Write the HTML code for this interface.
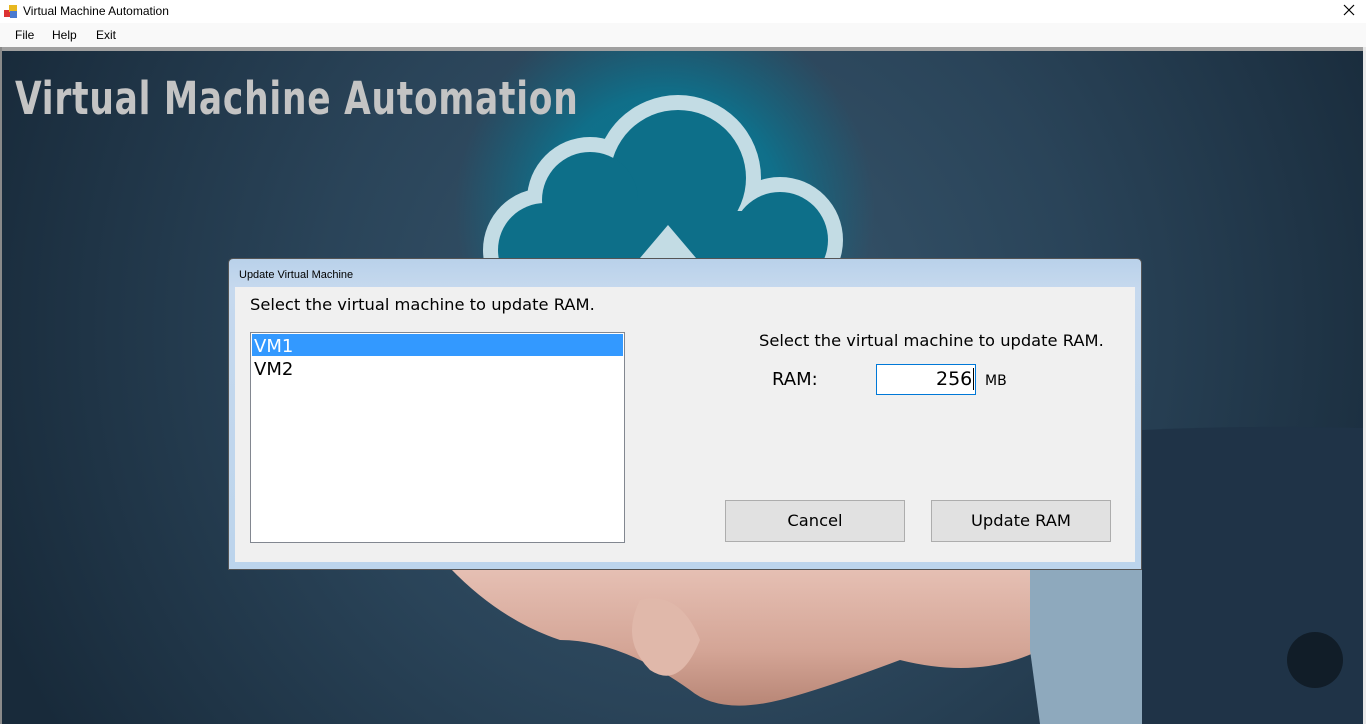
<!DOCTYPE html>
<html><head><meta charset="utf-8"><style>
*{margin:0;padding:0;box-sizing:border-box}
body{width:1366px;height:724px;overflow:hidden;background:#fff;font-family:"Liberation Sans",sans-serif;position:relative}
.t{position:absolute;font-family:"DejaVu Sans","Liberation Sans",sans-serif;white-space:nowrap}
</style></head><body>
<div style="position:absolute;left:0;top:0;width:1366px;height:23px;background:#fff"></div>
<svg style="position:absolute;left:4px;top:5px" width="14" height="14"><rect x="0" y="5" width="6" height="7" fill="#d33"/><rect x="5" y="0" width="8" height="7" fill="#e8b820"/><rect x="6" y="6" width="7" height="7" fill="#4a7ad0"/></svg>
<div style="position:absolute;left:23px;top:4px;font-size:12px;color:#000;font-family:'Liberation Sans',sans-serif">Virtual Machine Automation</div>
<svg style="position:absolute;left:1343px;top:4px" width="12" height="12"><path d="M1 1L11 11M11 1L1 11" stroke="#000" stroke-width="1.2"/></svg>
<div style="position:absolute;left:0;top:23px;width:1366px;height:24px;background:#f9f9f9;font-size:12px">
<span style="position:absolute;left:15px;top:5px">File</span><span style="position:absolute;left:52px;top:5px">Help</span><span style="position:absolute;left:96px;top:5px">Exit</span></div>
<div style="position:absolute;left:0;top:47px;width:1366px;height:4px;background:#a0a0a0"></div>
<div style="position:absolute;left:0;top:47px;width:2px;height:677px;background:#8a8a8a"></div>
<div style="position:absolute;right:0;top:47px;width:3px;height:677px;background:#e8e8e8"></div>
<svg style="position:absolute;left:2px;top:51px" width="1361" height="673" viewBox="2 51 1361 673">
<defs>
<radialGradient id="bg" cx="700" cy="330" r="760" gradientUnits="userSpaceOnUse">
<stop offset="0" stop-color="#38576e"/><stop offset="0.5" stop-color="#2a4459"/><stop offset="1" stop-color="#182a3a"/></radialGradient>
<radialGradient id="glow" cx="665" cy="210" r="210" gradientUnits="userSpaceOnUse">
<stop offset="0" stop-color="#0a7b96"/><stop offset="0.55" stop-color="#0a7590" stop-opacity="0.85"/><stop offset="1" stop-color="#0a6a85" stop-opacity="0"/></radialGradient>
<linearGradient id="skin" x1="0" y1="0" x2="0" y2="1"><stop offset="0" stop-color="#e6c0b4"/><stop offset="0.6" stop-color="#d4a596"/><stop offset="1" stop-color="#b88676"/></linearGradient>
</defs>
<rect x="2" y="51" width="1361" height="673" fill="url(#bg)"/>
<rect x="2" y="51" width="1361" height="673" fill="url(#glow)"/>
<g fill="#c3dce4">
<circle cx="678" cy="178" r="83"/><circle cx="590" cy="200" r="63"/><circle cx="545" cy="250" r="62"/><circle cx="780" cy="240" r="63"/>
</g>
<g fill="#0d6f89">
<circle cx="678" cy="178" r="68"/><circle cx="590" cy="200" r="48"/><circle cx="545" cy="250" r="47"/><circle cx="780" cy="240" r="48"/>
<rect x="545" y="200" width="190" height="80"/><rect x="730" y="211" width="30" height="69"/>
</g>
<path d="M640 258L668 225L696 258Z" fill="#c3dce4"/>
<path d="M450 568L1050 568L1040 650Q980 680 900 660Q820 690 780 700Q720 715 690 690Q620 640 560 640Q500 620 450 568Z" fill="url(#skin)"/>
<path d="M640 600Q680 590 700 640Q680 690 650 670Q620 640 640 600Z" fill="#e0b8aa"/>
<path d="M1030 568L1150 568L1150 724L1040 724L1030 650Z" fill="#8ea9bd"/>
<path d="M1142 430Q1250 425 1363 428L1363 724L1142 724Z" fill="#1f3347"/>
<circle cx="1315" cy="660" r="28" fill="#111d28"/>
</svg>
<div style="position:absolute;left:15px;top:72px;font-family:'DejaVu Sans',sans-serif;font-weight:bold;font-size:45px;color:#c4c4c4;letter-spacing:1px;transform:scaleX(0.765);transform-origin:left">Virtual Machine Automation</div>
<div style="position:absolute;left:228px;top:258px;width:914px;height:312px;border:1px solid #555;border-radius:5px 5px 0 0;background:linear-gradient(#b9d1ea,#c6d9ee 30px,#bcd4ec)"></div>
<div style="position:absolute;left:239px;top:269px;font-size:11px;color:#000;font-family:'Liberation Sans',sans-serif">Update Virtual Machine</div>
<div style="position:absolute;left:235px;top:287px;width:900px;height:275px;background:#f0f0f0"></div>
<div class="t" style="left:250px;top:295px;font-size:16.3px;color:#000">Select the virtual machine to update RAM.</div>
<div style="position:absolute;left:250px;top:332px;width:375px;height:211px;background:#fff;border:1px solid #828790"></div>
<div style="position:absolute;left:252px;top:334px;width:371px;height:22px;background:#3399ff"></div>
<div class="t" style="left:254px;top:336px;font-size:18px;color:#fff">VM1</div>
<div class="t" style="left:254px;top:359px;font-size:18px;color:#000">VM2</div>
<div class="t" style="left:759px;top:331px;font-size:16.3px;color:#000">Select the virtual machine to update RAM.</div>
<div class="t" style="left:772px;top:369px;font-size:18px;color:#000">RAM:</div>
<div style="position:absolute;left:876px;top:364px;width:100px;height:31px;background:#fff;border:1px solid #0078d7"></div>
<div class="t" style="left:936px;top:368px;font-size:19px;color:#000">256</div>
<div style="position:absolute;left:973px;top:368px;width:1px;height:22px;background:#000"></div>
<div class="t" style="left:985px;top:373px;font-size:14px;color:#000">MB</div>
<div style="position:absolute;left:725px;top:500px;width:180px;height:42px;background:#e1e1e1;border:1px solid #adadad"></div>
<div class="t" style="left:725px;top:511px;width:180px;text-align:center;font-size:16.3px;color:#000">Cancel</div>
<div style="position:absolute;left:931px;top:500px;width:180px;height:42px;background:#e1e1e1;border:1px solid #adadad"></div>
<div class="t" style="left:931px;top:511px;width:180px;text-align:center;font-size:16.3px;color:#000">Update RAM</div>
</body></html>
